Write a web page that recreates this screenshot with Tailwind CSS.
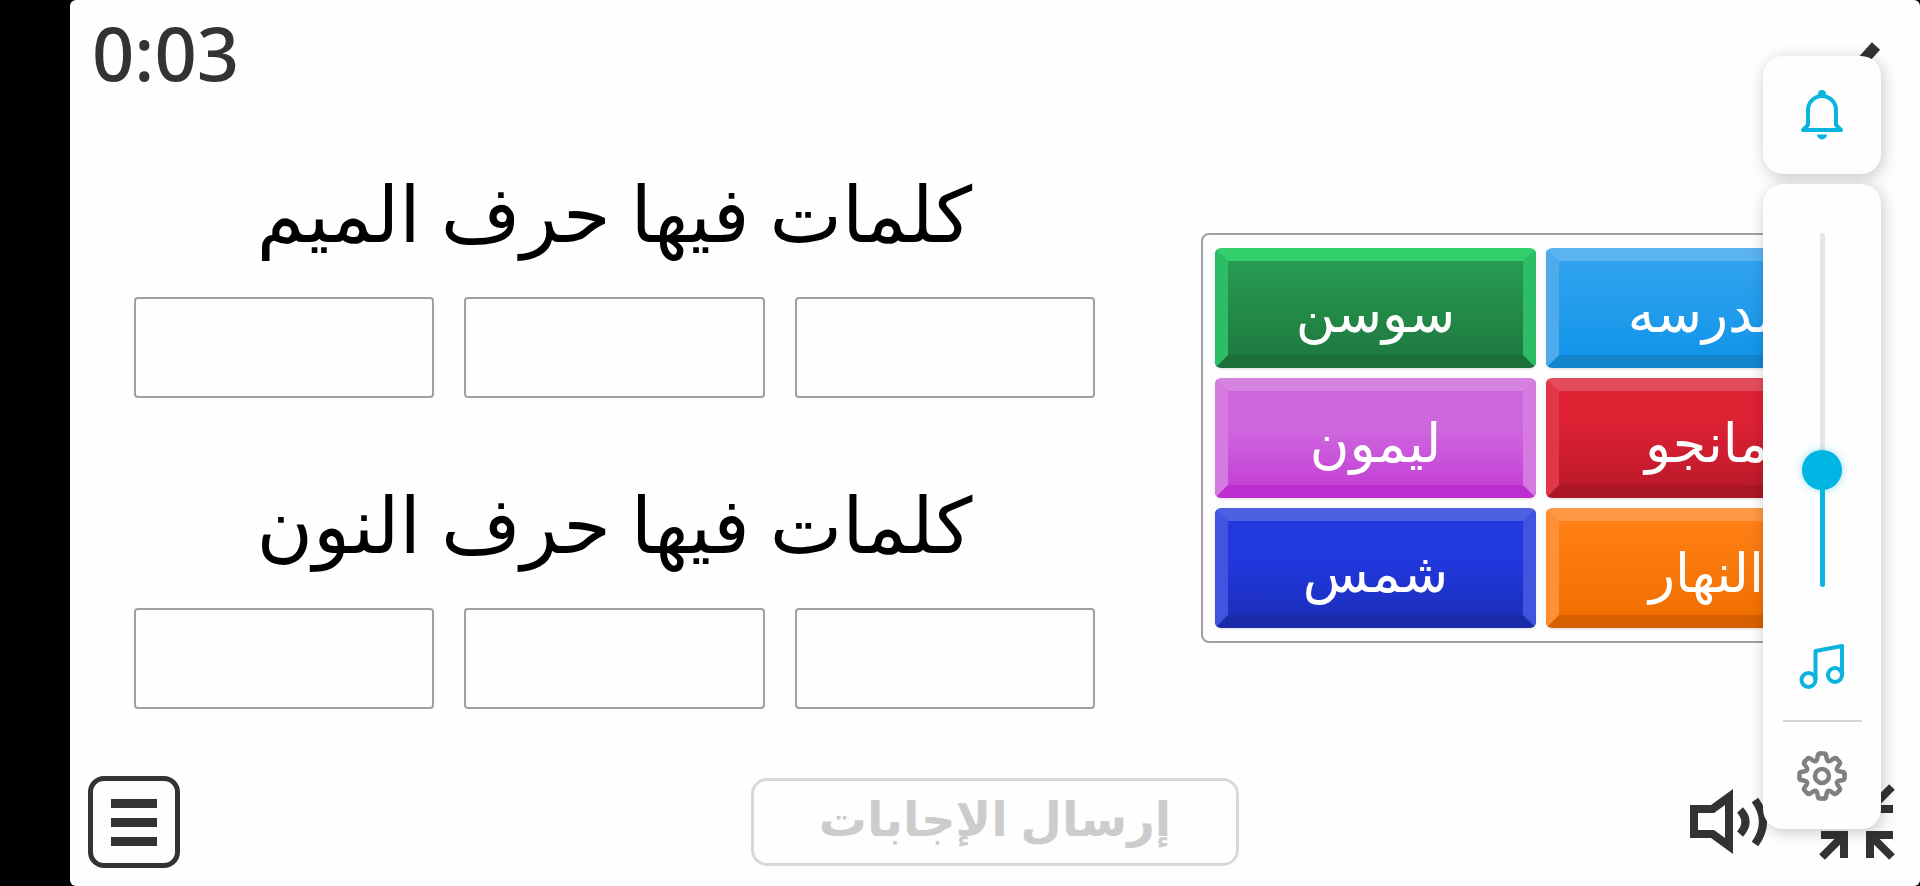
<!DOCTYPE html>
<html lang="ar">
<head>
<meta charset="utf-8">
<meta name="viewport" content="width=device-width, initial-scale=1">
<title>كلمات فيها حرف الميم والنون</title>
<script src="https://cdn.jsdelivr.net/npm/@tailwindcss/browser@4"></script>
</head>
<body class="bg-black pl-[70px] font-['Noto_Sans','DejaVu_Sans',sans-serif]">
<div class="relative flex min-h-screen flex-col overflow-hidden rounded-md bg-[#fefefe]">

  <header class="flex items-start justify-between pt-1 pr-[39px] pl-[22px]">
    <time class="text-[74px] leading-[98px] font-medium text-[#333]">0:03</time>
    <svg class="mt-9 h-[56px] w-[72px]" viewBox="0 0 72 56" fill="none" stroke="#333" stroke-width="11" aria-hidden="true"><path d="M4 30 24 54 67 6"/></svg>
  </header>

  <main class="grid flex-1 grid-cols-[961fr_680fr] items-start gap-[106px] pr-[39px] pl-16">
    <div class="flex min-w-0 flex-col gap-[60px] pt-[45px]">
      <section>
        <h2 dir="rtl" class="h-[150px] text-center text-[77px] leading-[132px] whitespace-nowrap text-black">كلمات فيها حرف الميم</h2>
        <div class="grid grid-cols-3 gap-[30px]">
          <div class="h-[101px] rounded-sm border-2 border-[#a0a0a0]"></div>
          <div class="h-[101px] rounded-sm border-2 border-[#a0a0a0]"></div>
          <div class="h-[101px] rounded-sm border-2 border-[#a0a0a0]"></div>
        </div>
      </section>
      <section>
        <h2 dir="rtl" class="h-[150px] text-center text-[77px] leading-[132px] whitespace-nowrap text-black">كلمات فيها حرف النون</h2>
        <div class="grid grid-cols-3 gap-[30px]">
          <div class="h-[101px] rounded-sm border-2 border-[#a0a0a0]"></div>
          <div class="h-[101px] rounded-sm border-2 border-[#a0a0a0]"></div>
          <div class="h-[101px] rounded-sm border-2 border-[#a0a0a0]"></div>
        </div>
      </section>
    </div>

    <div class="mt-[131px] grid min-w-0 grid-cols-2 gap-[10px] rounded-lg border-2 border-[#a0a0a0] px-3 py-[13px] text-[54px] leading-[80px] whitespace-nowrap text-white">
      <button dir="rtl" class="h-[120px] rounded-md border-[13px] border-x-[#2dbd64] border-t-[#33cf6c] border-b-[#1c6f3a] bg-linear-to-b from-[#279c52] to-[#1f7a40] pt-1.5 shadow-sm">سوسن</button>
      <button dir="rtl" class="h-[120px] rounded-md border-[13px] border-x-[#4dabec] border-t-[#5bb4ef] border-b-[#1285cd] bg-linear-to-b from-[#30a3ee] to-[#1095ea] pt-1.5 shadow-sm">مدرسه</button>
      <button dir="rtl" class="h-[120px] rounded-md border-[13px] border-x-[#d47ae0] border-t-[#d783e2] border-b-[#bc2dcf] bg-linear-to-b from-[#ce66de] from-40% to-[#c441d5] pt-1.5 shadow-sm">ليمون</button>
      <button dir="rtl" class="h-[120px] rounded-md border-[13px] border-x-[#e03848] border-t-[#e34d5b] border-b-[#aa1826] bg-linear-to-b from-[#df2134] from-30% to-[#be1a2b] pt-1.5 shadow-sm">مانجو</button>
      <button dir="rtl" class="h-[120px] rounded-md border-[13px] border-x-[#4054e0] border-t-[#4e60e2] border-b-[#1a2ba9] bg-linear-to-b from-[#2138de] from-40% to-[#1c2fbe] pt-1.5 shadow-sm">شمس</button>
      <button dir="rtl" class="h-[120px] rounded-md border-[13px] border-x-[#ff9035] border-t-[#ff9844] border-b-[#d66000] bg-linear-to-b from-[#ff8015] to-[#f27000] pt-1.5 shadow-sm">النهار</button>
    </div>
  </main>

  <footer class="grid grid-cols-[1fr_488px_1fr] items-center px-[18px] pb-[18px]">
    <button aria-label="القائمة" class="flex h-[92px] w-[92px] flex-col items-center justify-center gap-[10px] rounded-2xl border-[5px] border-[#333]">
      <span class="h-[9px] w-[46px] bg-[#333]"></span>
      <span class="h-[9px] w-[46px] bg-[#333]"></span>
      <span class="h-[9px] w-[46px] bg-[#333]"></span>
    </button>
    <button dir="rtl" disabled class="h-[88px] rounded-2xl border-[3px] border-[#d8d8d8] pb-2 text-[48px] leading-[74px] font-bold whitespace-nowrap text-[#ccc]">إرسال الإجابات</button>
    <div class="flex items-center justify-end gap-[50px] pr-[7px]">
      <button aria-label="الصوت">
        <svg class="h-[68px] w-[80px]" viewBox="0 0 80 68" fill="none" stroke="#333" stroke-width="8" aria-hidden="true"><path d="M1 17H22L44 1V66L22 50H1ZM9 25V42H25L36 50V17L25 25Z" fill="#333" fill-rule="evenodd" stroke="none"/><path d="M51 22Q62 34 51 46M66 12Q82 34 66 56"/></svg>
      </button>
      <button aria-label="إنهاء ملء الشاشة">
        <svg class="h-[76px] w-[76px]" viewBox="0 0 76 76" fill="none" stroke="#333" stroke-width="8" aria-hidden="true"><path d="M2 51H25V74M25 51 3 73M74 51H51V74M51 51 73 73M2 25H25V2M25 25 3 3M74 25H51V2M51 25 73 3"/></svg>
      </button>
    </div>
  </footer>

  <aside class="absolute top-[56px] right-[39px] flex w-[118px] flex-col gap-[10px]">
    <button aria-label="الإشعارات" class="flex h-[118px] items-center justify-center rounded-[20px] bg-[#fefefe] shadow-[2px_3px_16px_rgba(0,0,0,0.22)]">
      <svg class="h-[50px] w-[42px]" viewBox="0 0 42 50" fill="none" stroke="#0ab4e0" stroke-width="4" stroke-linejoin="round" aria-hidden="true"><path d="M7 35V20a14 14 0 0 1 28 0V35L40 40H2Z"/><path d="M17 7V4a4 4 0 0 1 8 0V7ZM16 44.500H26A5 5 0 0 1 16 44.500Z" fill="#0ab4e0" stroke="none"/></svg>
    </button>
    <div class="flex h-[645px] flex-col items-center rounded-[20px] bg-[#fefefe] pt-[49px] shadow-[2px_3px_16px_rgba(0,0,0,0.22)]">
      <input type="range" min="0" max="100" value="31" aria-label="مستوى صوت الوسائط" class="h-[354px] w-[5px] appearance-none rounded-full bg-linear-to-b from-[#e6e6e6] from-66% to-[#0ab4e0] to-66% [direction:rtl] [writing-mode:vertical-lr] [&::-webkit-slider-thumb]:h-[40px] [&::-webkit-slider-thumb]:w-[40px] [&::-webkit-slider-thumb]:appearance-none [&::-webkit-slider-thumb]:rounded-full [&::-webkit-slider-thumb]:bg-[#00b4e4] [&::-webkit-slider-thumb]:shadow-[0_0_8px_rgba(0,180,228,0.4)]">
      <button aria-label="صوت الوسائط" class="mt-[57px]">
        <svg class="h-[46px] w-[46px]" viewBox="0 0 46 46" fill="none" stroke="#0ab4e0" stroke-width="4" stroke-linejoin="round" aria-hidden="true"><circle cx="9.500" cy="36" r="7"/><circle cx="36" cy="31" r="7"/><path d="M16.500 36V7L43 2V31"/></svg>
      </button>
      <hr class="mt-[30px] w-[79px] border-t-2 border-[#d4d4d4]">
      <button aria-label="الإعدادات" class="mt-[27px]">
        <svg class="h-[54px] w-[54px]" viewBox="-27 -27 54 54" fill="none" stroke="#808080" stroke-width="4.500" stroke-linejoin="round" stroke-linecap="round" aria-hidden="true">
          <defs><path id="tooth" d="M-2-22.500H2Q4-22.500 4.200-20L4.800-17Q5.600-13.600 8.630-15.450L11.140-17.090Q13.070-18.740 14.500-17.340"/></defs>
          <use href="#tooth"/><use href="#tooth" transform="rotate(45)"/><use href="#tooth" transform="rotate(90)"/><use href="#tooth" transform="rotate(135)"/><use href="#tooth" transform="rotate(180)"/><use href="#tooth" transform="rotate(225)"/><use href="#tooth" transform="rotate(270)"/><use href="#tooth" transform="rotate(315)"/>
          <circle r="7"/>
        </svg>
      </button>
    </div>
  </aside>
</div>
</body>
</html>
